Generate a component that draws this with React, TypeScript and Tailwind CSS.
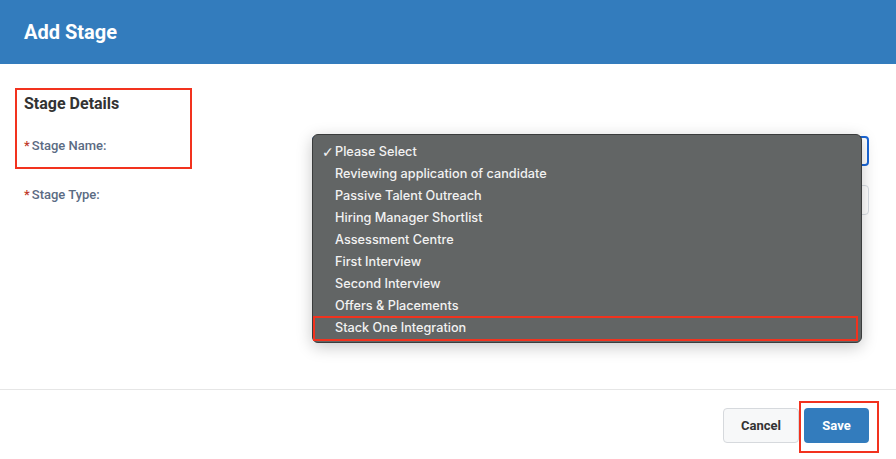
import React from "react";

const stages = [
  "Please Select",
  "Reviewing application of candidate",
  "Passive Talent Outreach",
  "Hiring Manager Shortlist",
  "Assessment Centre",
  "First Interview",
  "Second Interview",
  "Offers & Placements",
  "Stack One Integration",
];

export default function App() {
  return (
    <div className="relative w-[896px] h-[459px] bg-white overflow-hidden font-['Roboto',sans-serif]">
      <header className="h-[64px] bg-[#337cbd] flex items-center px-6">
        <h1 className="text-white text-[20px] font-bold">Add Stage</h1>
      </header>

      <main className="pl-6 pr-[27px] pt-[29px] h-[325px]">
        <h2 className="text-[16px] font-bold text-[#333] leading-[22px]">Stage Details</h2>
        <div className="mt-[21px] flex flex-col gap-[19px]">
          <div className="flex items-start">
            <label className="w-[288px] mt-[2px] leading-[16px] text-[13px] font-medium text-[#5b6b83]">
              <span className="text-[#c0392b] mr-[2px]">*</span>Stage Name:
            </label>
            <div className="flex-1 h-[30px] rounded-[4px] border-2 border-[#1a66d6]" />
          </div>
          <div className="flex items-start">
            <label className="w-[288px] mt-[2px] leading-[16px] text-[13px] font-medium text-[#5b6b83]">
              <span className="text-[#c0392b] mr-[2px]">*</span>Stage Type:
            </label>
            <div className="flex-1 h-[30px] rounded-[4px] border border-[#d8dde3]" />
          </div>
        </div>
      </main>

      <footer className="border-t border-[#e6e6e6] flex justify-end gap-[5px] pr-[27px] pt-[18px]">
        <button className="w-[76px] h-[35px] rounded-[4px] border border-[#d6d9dd] bg-[#f7f8f9] text-[13px] font-bold text-[#333]">
          Cancel
        </button>
        <button className="w-[65px] h-[35px] rounded-[4px] bg-[#337cbd] text-[13px] font-bold text-white">
          Save
        </button>
      </footer>

      {/* native select popup */}
      <div className="absolute left-[312px] top-[134px] w-[550px] h-[209px] rounded-[6px] border border-[#3a3c3c] bg-[#626565] shadow-[0_4px_16px_rgba(0,0,0,0.22)] pt-[6px] font-['Inter',sans-serif]">
        {stages.map((s, i) => (
          <div key={s} className="relative h-[22px] flex items-center text-[12.7px] text-[#f2f2f2] font-medium">
            <span className="w-[22px] shrink-0 pl-[9px] text-[14px] leading-none font-['DejaVu_Sans',sans-serif]">{i === 0 ? "✓" : ""}</span>
            <span>{s}</span>
          </div>
        ))}
      </div>

      {/* annotation boxes */}
      <div className="absolute left-[15px] top-[88px] w-[177px] h-[81px] border-2 border-[#f2321e]" />
      <div className="absolute left-[313px] top-[316px] w-[545px] h-[25px] border-2 border-[#f2321e]" />
      <div className="absolute left-[799px] top-[401px] w-[80px] h-[52px] border-2 border-[#f2321e]" />
    </div>
  );
}
